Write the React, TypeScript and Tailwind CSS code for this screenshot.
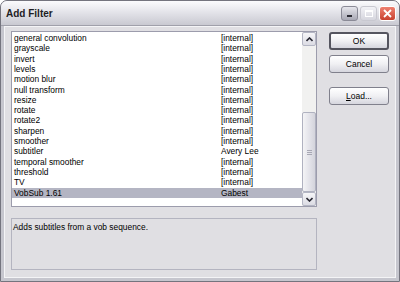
import React from "react";

const rows: [string, string][] = [
  ["general convolution", "[internal]"],
  ["grayscale", "[internal]"],
  ["invert", "[internal]"],
  ["levels", "[internal]"],
  ["motion blur", "[internal]"],
  ["null transform", "[internal]"],
  ["resize", "[internal]"],
  ["rotate", "[internal]"],
  ["rotate2", "[internal]"],
  ["sharpen", "[internal]"],
  ["smoother", "[internal]"],
  ["subtitler", "Avery Lee"],
  ["temporal smoother", "[internal]"],
  ["threshold", "[internal]"],
  ["TV", "[internal]"],
  ["VobSub 1.61", "Gabest"],
];

function Btn({ label, def, u }: { label: string; def?: boolean; u?: boolean }) {
  return (
    <div
      className={`h-[18px] w-[60px] rounded-[3px] flex items-center justify-center bg-gradient-to-b from-white via-[#f0f0f3] to-[#d6d6de] text-[8.5px] text-black ${
        def ? "border-2 border-[#55555f]" : "border border-[#80808c]"
      }`}
    >
      {u ? (
        <span>
          <span className="underline">L</span>oad...
        </span>
      ) : (
        label
      )}
    </div>
  );
}

function ScrollBtn({ up }: { up?: boolean }) {
  return (
    <div className="h-[14px] w-[14px] rounded-[2px] border border-[#b4b6c4] bg-gradient-to-b from-[#f6f6f8] to-[#dcdce4] flex items-center justify-center">
      <svg width="7" height="5" viewBox="0 0 7 5">
        <path
          d={up ? "M0.5 4 L3.5 1 L6.5 4" : "M0.5 1 L3.5 4 L6.5 1"}
          stroke="#2a2a34"
          strokeWidth="1.6"
          fill="none"
        />
      </svg>
    </div>
  );
}

export default function App() {
  return (
    <div
      className="w-[400px] h-[282px] bg-white"
      style={{ fontFamily: '"Liberation Sans", Arial, sans-serif' }}
    >
      <div className="w-[400px] h-[282px] flex flex-col bg-[#c6c6ce] border border-[#74747e] rounded-t-[7px] overflow-hidden">
        {/* Title bar */}
        <div className="h-[25px] shrink-0 flex items-center bg-gradient-to-b from-[#fbfbfd] via-[#e2e2e8] to-[#c9c9d1] border-b border-[#a0a0aa]">
          <div className="pl-[5px] text-[10px] font-bold text-[#1e1e24] flex-1">Add Filter</div>
          <div className="flex items-center gap-[2px] pr-[3px]">
            <div className="w-[17px] h-[15px] rounded-[3px] border border-[#8a8a96] bg-gradient-to-b from-[#e6e6ec] to-[#a8a8b4] relative">
              <div className="absolute left-[5px] bottom-[3px] w-[5px] h-[2px] bg-[#2c2c34]" />
            </div>
            <div className="w-[17px] h-[15px] rounded-[3px] border border-[#c8c8d0] bg-gradient-to-b from-[#f2f2f6] to-[#d6d6de] relative">
              <div className="absolute left-[4px] top-[3px] w-[8px] h-[7px] border border-white border-t-2" />
            </div>
            <div className="w-[17px] h-[15px] rounded-[3px] border border-white bg-gradient-to-b from-[#ee8070] to-[#c8402f] flex items-center justify-center">
              <svg width="9" height="9" viewBox="0 0 9 9">
                <path d="M1 1 L8 8 M8 1 L1 8" stroke="white" strokeWidth="1.8" />
              </svg>
            </div>
          </div>
        </div>
        {/* Body */}
        <div className="flex-1 mx-[3px] mb-[3px] bg-[#e0dfe3] border border-[#f4f4f6] pl-[6px] pt-[4px]">
          <div className="flex">
            {/* Listbox */}
            <div className="w-[306px] h-[176px] border border-[#9c9cac] bg-white flex">
              <div className="flex-1 pt-[1px] overflow-hidden">
                {rows.map(([n, a], i) => (
                  <div
                    key={n}
                    className={`flex h-[10.33px] items-center text-[8.4px] text-black whitespace-nowrap ${
                      i === rows.length - 1 ? "bg-[#b4b5c3]" : ""
                    }`}
                  >
                    <div className="w-[209px] pl-[2px]">{n}</div>
                    <div>{a}</div>
                  </div>
                ))}
              </div>
              <div className="w-[14px] flex flex-col bg-[#f1f1f0]">
                <ScrollBtn up />
                <div className="flex-1" />
                <div className="h-[80px] w-[14px] rounded-[2px] border border-[#b0b2c0] bg-gradient-to-r from-[#f4f4f6] via-[#e4e4ea] to-[#d4d4dc] flex flex-col items-center justify-center gap-[1px]">
                  <div className="w-[5px] h-[1px] bg-[#a8a8b4]" />
                  <div className="w-[5px] h-[1px] bg-[#a8a8b4]" />
                  <div className="w-[5px] h-[1px] bg-[#a8a8b4]" />
                </div>
                <ScrollBtn />
              </div>
            </div>
            {/* Buttons */}
            <div className="ml-[12px] pt-[1px] flex flex-col">
              <Btn label="OK" def />
              <div className="h-[5px]" />
              <Btn label="Cancel" />
              <div className="h-[14px]" />
              <Btn label="Load" u />
            </div>
          </div>
          {/* Description */}
          <div className="mt-[11px] w-[306px] h-[52px] border border-[#b4b4c0] text-[8.4px] text-black pl-[1px] pt-[2px]">
            Adds subtitles from a vob sequence.
          </div>
        </div>
      </div>
    </div>
  );
}
